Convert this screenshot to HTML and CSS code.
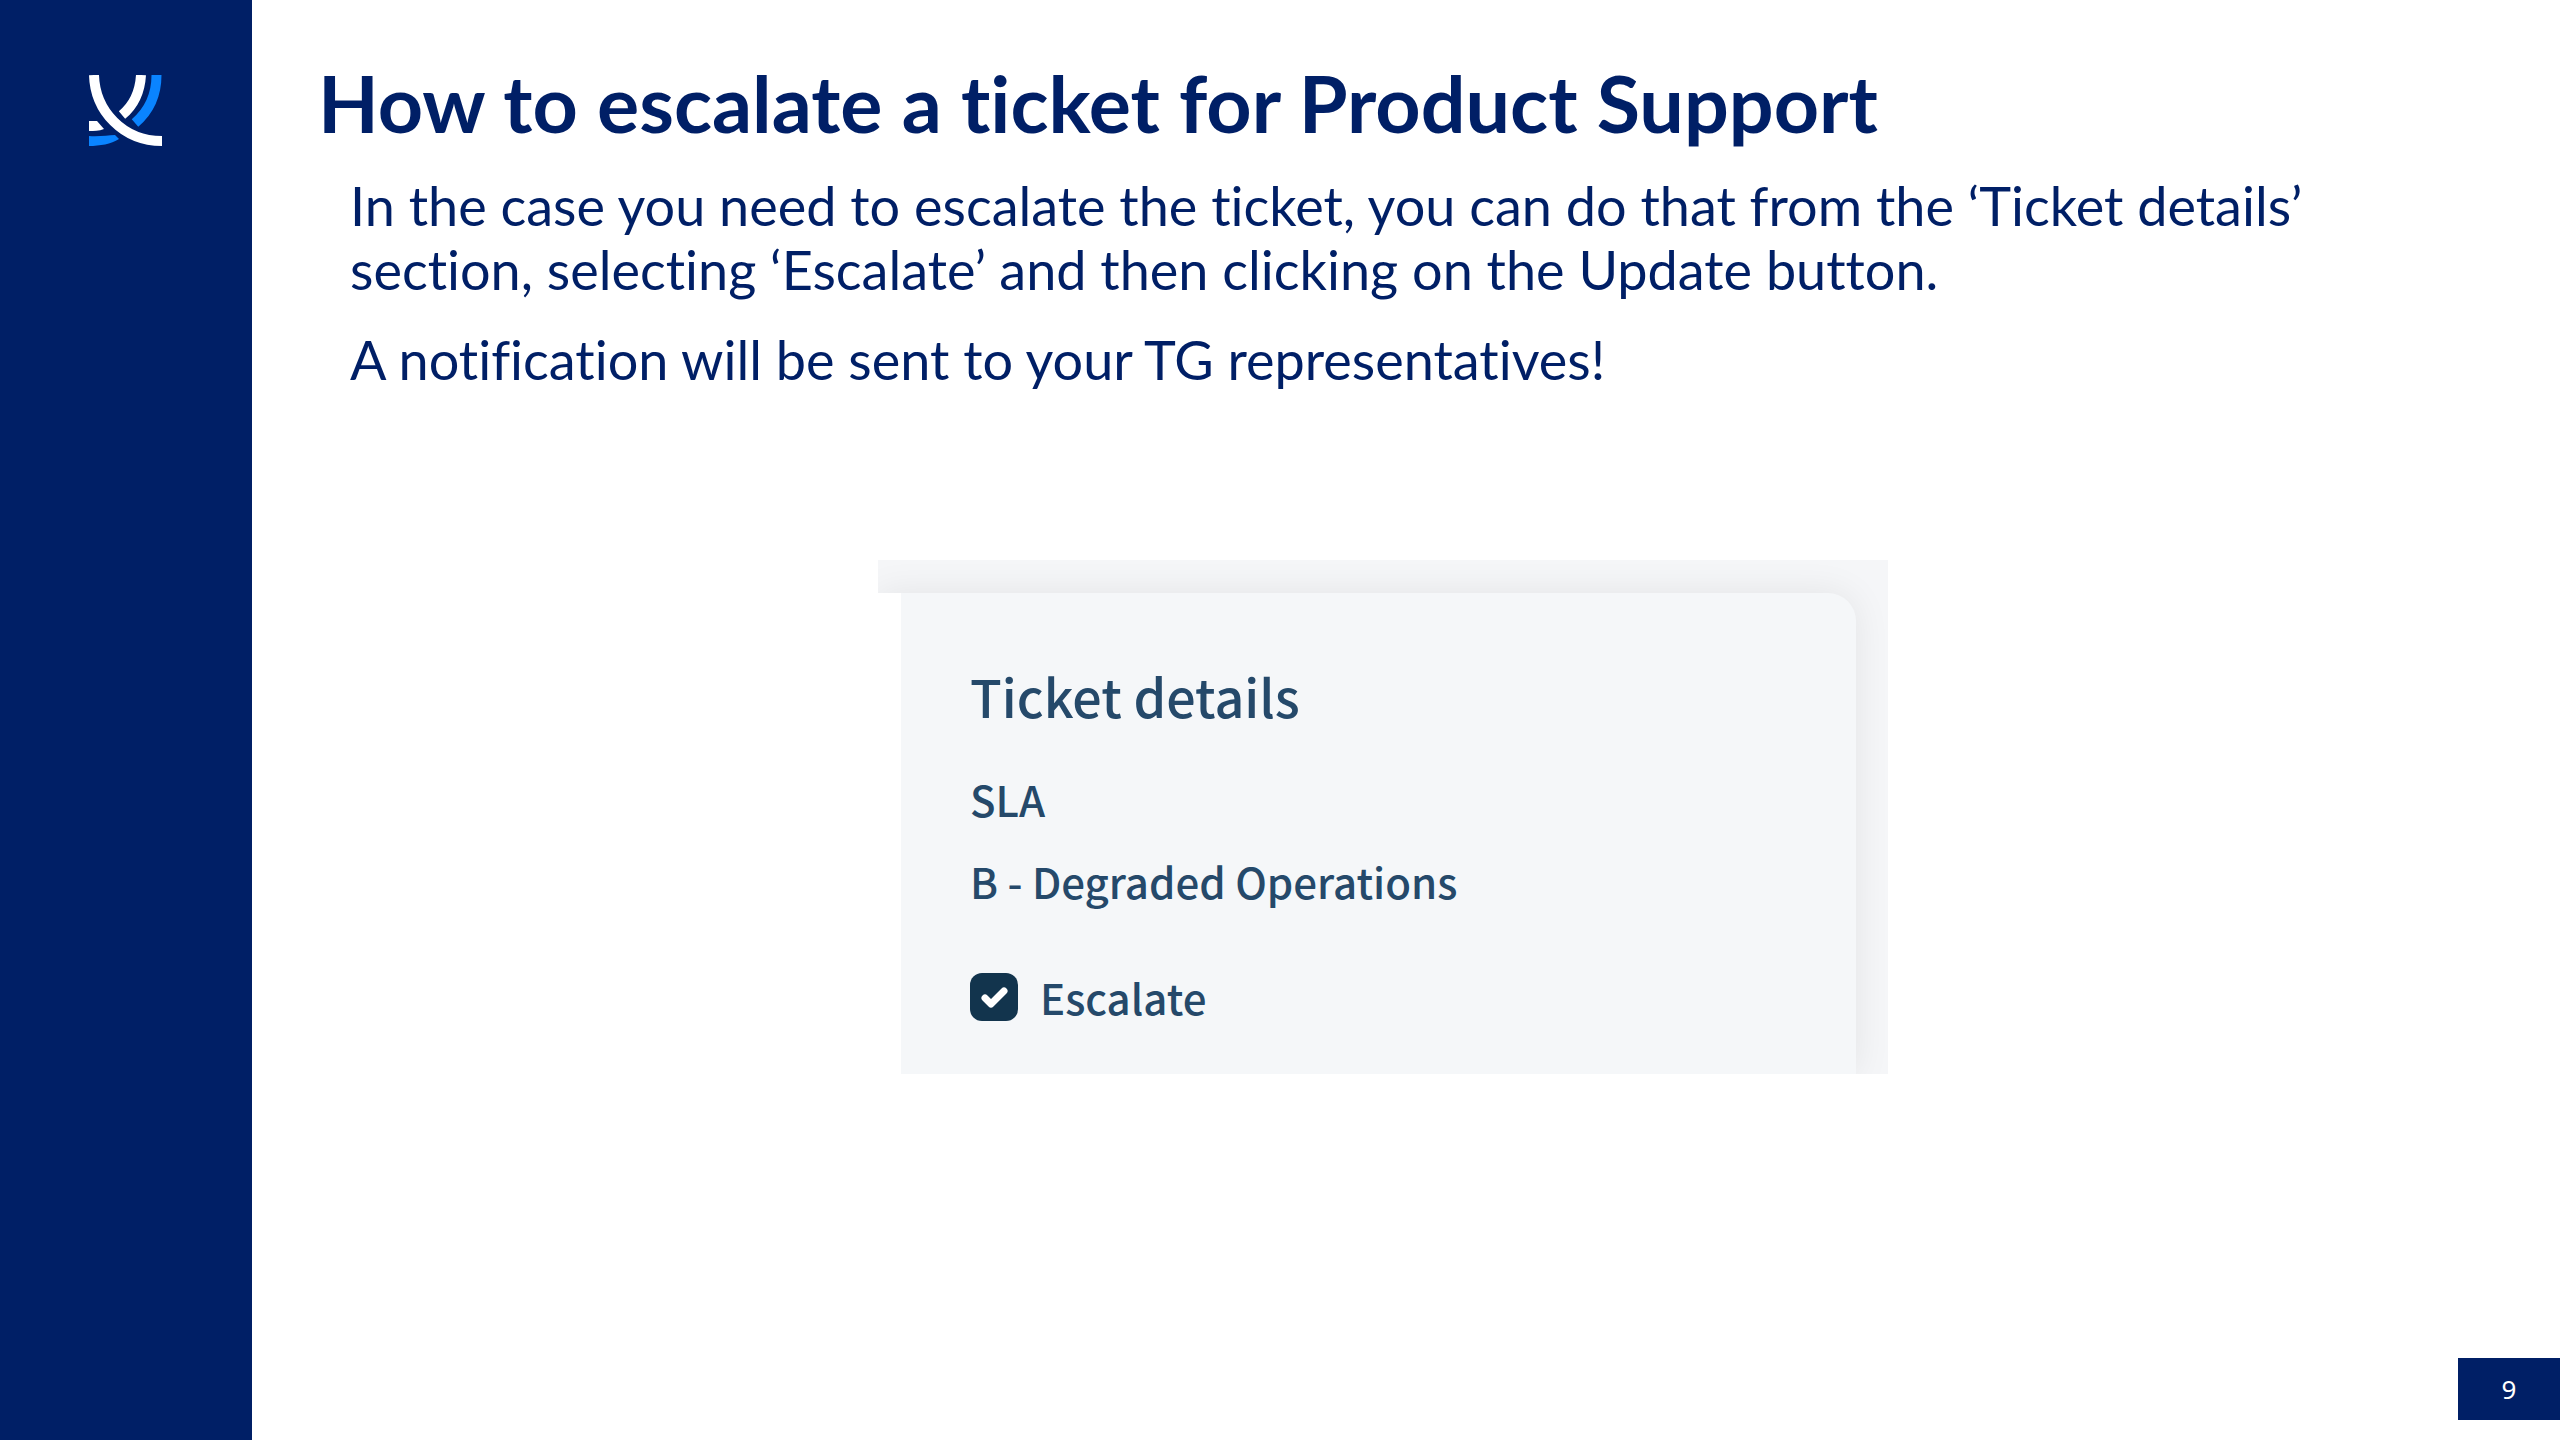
FILE: index.html
```
<!DOCTYPE html>
<html lang="en">
<head>
  <meta charset="UTF-8">
  <meta name="viewport" content="width=device-width, initial-scale=1.0">
  <title>How to escalate a ticket for Product Support</title>
  <link rel="stylesheet" href="styles.css">
</head>
<body>
  <aside class="sidebar">
    <svg class="logo" viewBox="0 0 73 71" role="img" aria-label="Logo">
      <path d="M67.500 0C67.500 19 60 36 46 48" fill="none" stroke="#0a84ff" stroke-width="10"/>
      <path d="M0 61C10 62 19 60 26 60L30 64C22 69 11 71 0 71Z" fill="#0a84ff"/>
      <path d="M0 46H8L15 54C10 56 5 56 0 56Z" fill="#fff"/>
      <path d="M52 0C51 17 44 31 33 40" fill="none" stroke="#fff" stroke-width="10"/>
      <path d="M5 0C6 36 34 66 73 66" fill="none" stroke="#fff" stroke-width="10"/>
    </svg>
  </aside>

  <main class="slide">
    <h1>How to escalate a ticket for Product Support</h1>
    <div class="intro">
      <p>In the case you need to escalate the ticket, you can do that from the ‘Ticket details’ section, selecting ‘Escalate’ and then clicking on the Update button.</p>
      <p>A notification will be sent to your TG representatives!</p>
    </div>

    <section class="snippet">
      <form class="card">
        <h2>Ticket details</h2>
        <p>SLA</p>
        <p>B - Degraded Operations</p>
        <div class="check-row">
          <input type="checkbox" id="escalate" name="escalate" checked>
          <label for="escalate">Escalate</label>
        </div>
      </form>
    </section>

    <footer class="page-number">9</footer>
  </main>
</body>
</html>
```

FILE: styles.css
```
* {
  box-sizing: border-box;
}
body {
  display: flex;
  min-height: 100vh;
  margin: 0;
  background-color: #fff;
  color: #001f66;
  font-family: Lato, "Open Sans", sans-serif;
  font-variant-ligatures: none;
}
.sidebar {
  flex: none;
  width: 252px;
  padding: 75px 89px;
  background-color: #001f66;
}
.logo {
  display: block;
  width: 73px;
  height: 71px;
}
.slide {
  display: flex;
  flex: 1;
  flex-direction: column;
  padding: 58px 0 20px 66px;
}
h1 {
  margin: 0;
  font-size: 79px;
  font-weight: bold;
  line-height: 90px;
}
.intro {
  padding: 26px 112px 0 32px;
}
.intro p {
  margin: 0 0 26px;
  font-size: 54px;
  line-height: 64px;
}
.snippet {
  align-self: center;
  width: calc(100% - 112px);
  max-width: 1010px;
  margin: 142px 112px 0 0;
  padding: 33px 32px 0 0;
  overflow: hidden;
  background-color: #f5f6f8;
}
.card {
  padding: 69px 69px 48px;
  border-left: 23px solid #fff;
  border-top-right-radius: 28px;
  background-color: #f5f7f9;
  box-shadow: 0 0 36px rgba(0, 0, 0, 0.08);
  color: #25496a;
  font-family: "Noto Sans CJK SC", sans-serif;
  font-weight: 500;
}
.card h2 {
  margin: 0 0 40px;
  font-size: 52px;
  font-weight: 500;
  line-height: 68px;
}
.card p {
  margin: 0 0 24px;
  font-size: 42px;
  line-height: 58px;
}
.check-row {
  display: flex;
  align-items: center;
  gap: 22px;
  padding-top: 34px;
  font-size: 42px;
  line-height: 58px;
}
.check-row input {
  flex: none;
  width: 48px;
  height: 48px;
  margin: 0;
  appearance: none;
  border-radius: 12px;
  background: #12344d url("data:image/svg+xml,%3Csvg xmlns='http://www.w3.org/2000/svg' viewBox='0 0 48 48'%3E%3Cpath d='M15 25l6 6 13-13' fill='none' stroke='%23fff' stroke-width='7' stroke-linecap='round' stroke-linejoin='round'/%3E%3C/svg%3E");
}
.page-number {
  align-self: flex-end;
  width: 102px;
  margin-top: auto;
  background-color: #001f66;
  color: #fff;
  font-family: "Noto Sans", sans-serif;
  font-size: 26px;
  line-height: 62px;
  text-align: center;
}
```
